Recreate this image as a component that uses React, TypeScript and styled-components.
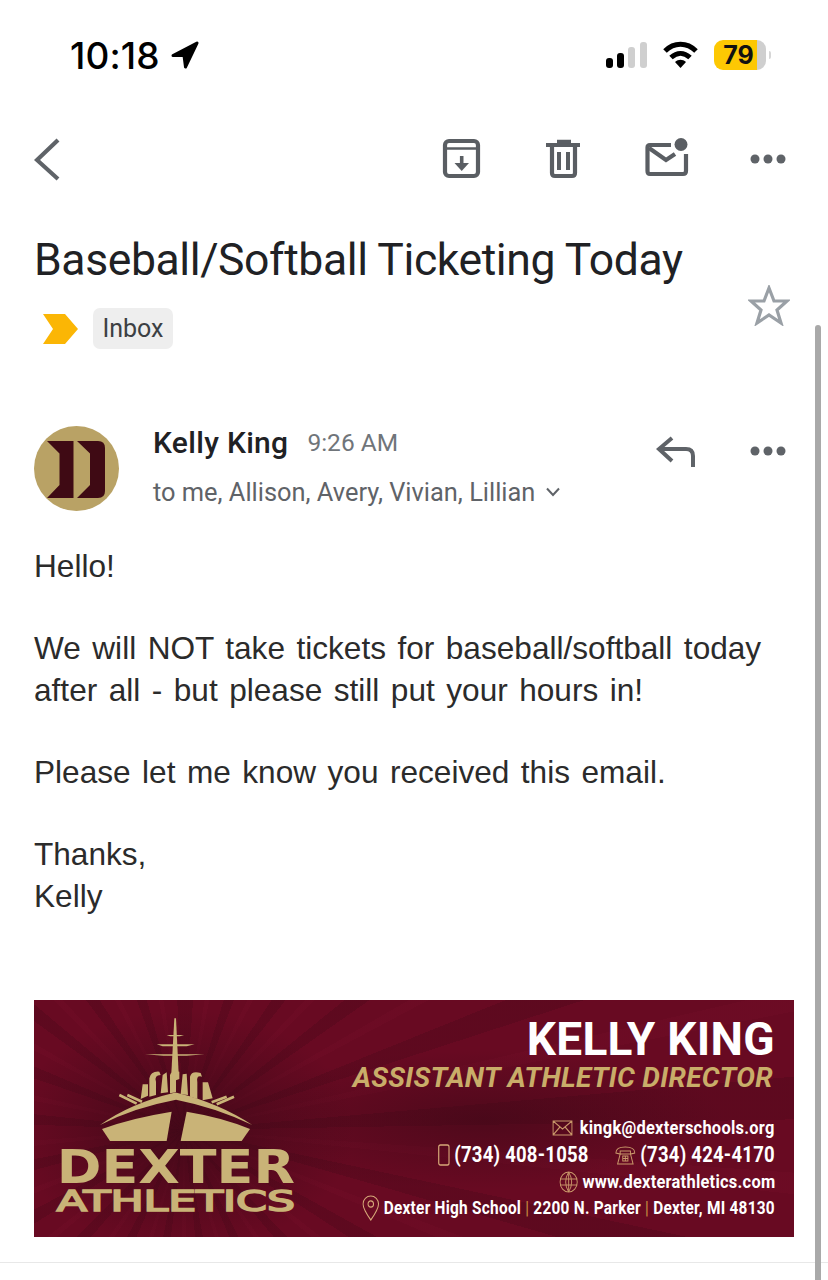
import React from "react";
import styled, { createGlobalStyle } from "styled-components";

const Global = createGlobalStyle`
  html, body { margin: 0; padding: 0; background: #fff; }
  * { box-sizing: border-box; }
`;
const Page = styled.div`
  position: relative; width: 828px; height: 1280px; overflow: hidden; background: #fff;
  font-family: Roboto, "Liberation Sans", sans-serif; color: #202124;
`;
const StatusBar = styled.div`
  height: 108px; padding: 40px 62px 0 70px; display: flex; justify-content: space-between; align-items: flex-start;
`;
const TimeGroup = styled.div`
  display: flex; align-items: center; gap: 11px; height: 30px; color: #000;
  font-family: Inter, sans-serif; font-weight: 500; font-size: 37px; letter-spacing: 0.1px;
`;
const StatusIcons = styled.div`display: flex; align-items: center; gap: 16px; height: 30px;`;
const Battery = styled.div`
  display: flex; align-items: center; justify-content: center; width: 52px; height: 30px; border-radius: 9px;
  background: linear-gradient(90deg, #fdc803 0 83%, #cfcfcf 83% 100%);
  font-family: Inter, sans-serif; font-weight: 700; font-size: 25px; color: #111; padding-right: 3px; position: relative;
  &::after { content: ""; position: absolute; right: -5px; top: 11px; width: 2px; height: 8px; border-radius: 0 2px 2px 0; background: #d6d6d6; }
`;
const Toolbar = styled.div`
  height: 102px; padding: 30px 42px 0 34px; display: flex; align-items: flex-start;
`;
const ToolSpacer = styled.div`flex: 1;`;
const ToolIcons = styled.div`display: flex; align-items: flex-start; gap: 65px;`;
const SubjectRow = styled.div`height: 98px; padding: 22px 34px 0 34px;`;
const Title = styled.h1`
  margin: 0; font-weight: 400; font-size: 44.5px; line-height: 56px; color: #202124; letter-spacing: -0.4px;
`;
const LabelRow = styled.div`
  height: 118px; padding: 0 39px 0 43px; display: flex; align-items: flex-start; position: relative;
`;
const LabelChip = styled.span`
  margin-left: 15px; width: 80px; height: 41px; border-radius: 7px; background: #eeeeee; display: flex; align-items: center; justify-content: center;
  font-size: 25px; color: #3c4043;
`;
const StarWrap = styled.div`position: absolute; right: 38px; top: -23px;`;
const MessageHead = styled.div`
  height: 100px; padding: 0 42px 0 34px; display: flex; align-items: flex-start;
`;
const Avatar = styled.div`flex: none; width: 85px; height: 85px;`;
const Meta = styled.div`margin-left: 34px; flex: 1;`;
const Sender = styled.div`display: flex; align-items: center; gap: 19px; height: 34px; line-height: 34px;`;
const SenderName = styled.span`font-size: 30px; font-weight: 500; color: #202124; letter-spacing: .3px;`;
const SentAt = styled.span`font-size: 24.5px; color: #70757a;`;
const Recipients = styled.div`
  margin-top: 15px; display: flex; align-items: center; gap: 11px; font-size: 25.4px; line-height: 34px; color: #5f6368;
`;
const HeadActions = styled.div`display: flex; align-items: flex-start; gap: 54px; padding-top: 10px;`;
const Body = styled.div`
  height: 474px; padding: 20px 34px 0; font-family: "Liberation Sans", Arial, sans-serif; font-size: 31.6px; line-height: 41.2px; color: #2b2b2b;
`;
const Para = styled.p`margin: 0 0 41.2px; word-spacing: 2.7px;`;
const Banner = styled.div`
  margin: 0 34px; width: 760px; height: 237px; display: flex; overflow: hidden; color: #fff;
  background:
    radial-gradient(ellipse 170px 120px at 150px 130px, rgba(58,8,22,.8), rgba(58,8,22,0)),
    radial-gradient(ellipse 240px 70px at 450px 120px, rgba(58,8,22,.55), rgba(58,8,22,0)),
    repeating-conic-gradient(from 0deg at 150px 130px, rgba(40,5,15,.16) 0 4deg, rgba(40,5,15,0) 4deg 9deg, rgba(135,20,50,.12) 9deg 11deg, rgba(40,5,15,0) 11deg 17deg),
    #680a22;
`;
const LogoSvg = styled.svg`flex: none; width: 300px; height: 237px;`;
const Card = styled.div`
  width: 460px; min-width: 0; padding: 15px 19px 0 0; display: flex; flex-direction: column; align-items: flex-end;
`;
const Name = styled.div`font-size: 46px; font-weight: 700; line-height: 48px; letter-spacing: .3px; color: #fff;`;
const JobTitle = styled.div`
  margin-top: -1px; padding-right: 2px; font-size: 28px; font-weight: 700; font-style: italic; line-height: 32px; color: #c9ad69; letter-spacing: .3px; white-space: nowrap;
`;
const ContactLine = styled.div<{ $mt?: number; $h?: number }>`
  margin-top: ${(p) => p.$mt ?? 0}px; height: ${(p) => p.$h ?? 27}px; display: flex; align-items: center; justify-content: flex-end; white-space: nowrap;
  font-size: 19.1px; font-weight: 700; transform: scaleX(.86); transform-origin: right center; letter-spacing: .3px; color: #fff;
`;
const BigContact = styled.span`font-size: 21.5px;`;
const SmallContact = styled.span`font-size: 17.9px;`;
const Gold = styled.span`color: #c9903f; font-weight: 400;`;
const IconGap = styled.span<{ $w: number; $l?: number }>`display: inline-flex; margin-right: ${(p) => p.$w}px; margin-left: ${(p) => p.$l ?? 0}px;`;
const Rule = styled.div`margin-top: 25px; height: 1px; background: #e8e8e8;`;
const Scrollbar = styled.div`
  position: absolute; left: 815px; top: 325px; width: 6px; height: 955px; border-radius: 3px 3px 0 0; background: #a9a9a9;
`;

const ic = "#5f6368";
const mailIc = "#5a5e63";

const App: React.FC = () => (
  <Page>
    <Global />
    <StatusBar>
      <TimeGroup>
        10:18
        <svg width="28" height="28" viewBox="0 0 28 28"><path d="M26 2 L14.500 26 L13 14.500 L2 14.500 Z" fill="#000" stroke="#000" strokeWidth="3" strokeLinejoin="round" /></svg>
      </TimeGroup>
      <StatusIcons>
        <svg width="41" height="28" viewBox="0 0 41 28">
          <rect x="0" y="17" width="7" height="10" rx="3" fill="#000" />
          <rect x="11" y="12" width="7" height="15" rx="3" fill="#000" />
          <rect x="22" y="6" width="7" height="21" rx="3" fill="#cfcfcf" />
          <rect x="34" y="1" width="7" height="26" rx="3" fill="#cfcfcf" />
        </svg>
        <svg width="35" height="28" viewBox="0 0 35 28" fill="none">
          <path d="M2 10 C11 1 24 1 33 10" stroke="#000" strokeWidth="5" />
          <path d="M8 16.500 C14 11 21 11 27 16.500" stroke="#000" strokeWidth="5" />
          <path d="M12 21 C15.500 18 19.500 18 23 21 L17.500 27 Z" fill="#000" />
        </svg>
        <Battery>79</Battery>
      </StatusIcons>
    </StatusBar>

    <Toolbar>
      <svg width="26" height="44" viewBox="0 0 26 44" fill="none"><path d="M24 2 L3 22 L24 41" stroke={ic} strokeWidth="4.200" /></svg>
      <ToolSpacer />
      <ToolIcons>
        <svg width="39" height="41" viewBox="0 0 39 41" fill="none">
          <rect x="3" y="3" width="33" height="35" rx="4" stroke={mailIc} strokeWidth="4.200" />
          <path d="M2 10.500 H37" stroke={mailIc} strokeWidth="2.500" />
          <path d="M19.700 18 V28" stroke={mailIc} strokeWidth="3.600" />
          <path d="M12.500 25 H27 L19.700 33 Z" fill={mailIc} />
        </svg>
        <svg width="34" height="41" viewBox="0 0 34 41" fill="none">
          <path d="M0 7 H35" stroke={mailIc} strokeWidth="4" />
          <path d="M11 3.500 H25" stroke={mailIc} strokeWidth="3.500" />
          <path d="M6 7 V35 Q6 38 9 38 H26 Q29 38 29 35 V7" stroke={mailIc} strokeWidth="4.200" />
          <path d="M13 14 V32 M22 14 V32" stroke={mailIc} strokeWidth="4" />
        </svg>
        <svg width="44" height="40" viewBox="0 0 44 40" fill="none">
          <path d="M26 7 H5 Q2.500 7 2.500 9.500 V33 Q2.500 36 5 36 H38 Q41 36 41 33 V16" stroke={mailIc} strokeWidth="4.200" />
          <path d="M4 10 L21 22 L30 16" stroke={mailIc} strokeWidth="4.200" />
          <circle cx="36" cy="6.500" r="6.500" fill={mailIc} />
        </svg>
        <svg width="36" height="40" viewBox="0 0 36 40" fill={ic} style={{ marginLeft: -4 }}>
          <circle cx="5" cy="21" r="4.500" /><circle cx="18" cy="21" r="4.500" /><circle cx="31" cy="21" r="4.500" />
        </svg>
      </ToolIcons>
    </Toolbar>

    <SubjectRow>
      <Title>Baseball/Softball Ticketing Today</Title>
    </SubjectRow>

    <LabelRow>
      <svg width="35" height="41" viewBox="0 0 35 41"><path d="M0 6 H22 L35 21 L22 36 H0 L10 21 Z" fill="#fbb605" /></svg>
      <LabelChip>Inbox</LabelChip>
      <StarWrap>
        <svg width="42" height="41" viewBox="0 0 42 41" fill="none"><path d="M21 3 L26 16 H39 L29 25 L33 38 L21 30 L9 38 L13 25 L3 16 H16 Z" stroke="#9aa0a6" strokeWidth="3.200" strokeLinejoin="miter" /></svg>
      </StarWrap>
    </LabelRow>

    <MessageHead>
      <Avatar>
        <svg width="85" height="85" viewBox="0 0 85 85">
          <circle cx="42.500" cy="42.500" r="42.500" fill="#b9a265" />
          <path d="M13 15 H39.500 V72 H13 L25.500 59 V27.500 Z" fill="#3f0a14" />
          <path d="M43 15 H64 Q71 15 71 22 V65 Q71 72 64 72 H43 L56 59 V27.500 Z" fill="#3f0a14" />
        </svg>
      </Avatar>
      <Meta>
        <Sender>
          <SenderName>Kelly King</SenderName>
          <SentAt>9:26 AM</SentAt>
        </Sender>
        <Recipients>
          to me, Allison, Avery, Vivian, Lillian
          <svg width="14" height="10" viewBox="0 0 14 10" fill="none"><path d="M1 1.500 L7 8 L13 1.500" stroke={ic} strokeWidth="2" /></svg>
        </Recipients>
      </Meta>
      <HeadActions>
        <svg width="40" height="32" viewBox="0 0 40 32" fill="none">
          <path d="M16 2 L3 13 L16 25" stroke={ic} strokeWidth="4" />
          <path d="M4 13 H30 Q37 13 37 20 V31" stroke={ic} strokeWidth="4" />
        </svg>
        <svg width="36" height="30" viewBox="0 0 36 30" fill={ic}>
          <circle cx="5" cy="15" r="4.500" /><circle cx="18" cy="15" r="4.500" /><circle cx="31" cy="15" r="4.500" />
        </svg>
      </HeadActions>
    </MessageHead>

    <Body>
      <Para>Hello!</Para>
      <Para>We will NOT take tickets for baseball/softball today<br />after all - but please still put your hours in!</Para>
      <Para>Please let me know you received this email.</Para>
      <Para>Thanks,<br />Kelly</Para>
    </Body>

    <Banner>
      <LogoSvg viewBox="12 15 900 711">
        <g fill="#c9b377">
          <path d="M433 70 H438 L446 235 H424 Z" />
          <path d="M410 120 H462 L450 124 H420 Z M380 148 H494 L470 154 H398 Z M345 178 H524 L470 182 H400 Z" />
          <path d="M210 390 Q300 325 433 293 L440 293 Q570 325 667 390 Q560 338 438 314 Q310 338 210 390 Z" />
          <path d="M216 402 Q300 370 425 350 L410 438 H240 Z" />
          <path d="M470 350 Q580 368 660 402 L635 438 H452 Z" />
          <path d="M358 305 V250 Q362 228 388 230 L392 240 Q372 240 378 260 V300 Z" />
          <path d="M420 295 V240 Q425 226 448 230 V252 L438 256 V292 Z" />
          <path d="M480 305 V245 Q485 226 512 234 L516 245 Q498 240 502 262 V312 Z" />
          <path d="M392 295 L398 240 L410 232 L414 292 Z M452 298 L458 238 L470 236 L474 300 Z" />
          <path d="M332 312 L338 268 H354 V302 Z M518 316 V262 H534 L548 310 Z" />
        </g>
        <g stroke="#c9b377" strokeWidth="8">
          <path d="M268 300 L320 326 M292 300 L336 320 M612 305 L560 328 M590 305 L545 322" />
        </g>
        <text x="80" y="565" textLength="715" lengthAdjust="spacingAndGlyphs" fontFamily="DejaVu Sans" fontWeight="700" fontSize="138" fill="#c9b377">DEXTER</text>
        <text x="80" y="648" textLength="715" lengthAdjust="spacingAndGlyphs" fontFamily="DejaVu Sans" fontWeight="400" fontSize="86" fill="#c9b377" stroke="#c9b377" strokeWidth="5">ATHLETICS</text>
      </LogoSvg>
      <Card>
        <Name>KELLY KING</Name>
        <JobTitle>ASSISTANT ATHLETIC DIRECTOR</JobTitle>
        <ContactLine $mt={20}>
          <IconGap $w={8}>
            <svg width="24" height="16" viewBox="0 0 24 16" fill="none"><path d="M1 1 H23 V15 H1 Z M1 1 L12 9 L23 1 M1 15 L9 7 M23 15 L15 7" stroke="#c9986a" strokeWidth="1.200" /></svg>
          </IconGap>
          kingk@dexterschools.org
        </ContactLine>
        <ContactLine>
          <IconGap $w={5}>
            <svg width="14" height="22" viewBox="0 0 14 22" fill="none"><rect x="1" y="1" width="12" height="20" rx="2" stroke="#d6a878" strokeWidth="1.400" /></svg>
          </IconGap>
          <BigContact>(734) 408-1058</BigContact>
          <IconGap $w={5} $l={31}>
            <svg width="24" height="20" viewBox="0 0 24 20" fill="none"><path d="M1 8 Q1 2 12 2 Q23 2 23 8 L18 9 V6 H6 V9 Z M6 9 L3 19 H21 L18 9 Z M9 11 H15 V16 H9 Z M12 11 V16 M9 13.500 H15" stroke="#c9986a" strokeWidth="1.100" /></svg>
          </IconGap>
          <BigContact>(734) 424-4170</BigContact>
        </ContactLine>
        <ContactLine>
          <IconGap $w={5}>
            <svg width="22" height="22" viewBox="0 0 22 22" fill="none"><circle cx="11" cy="11" r="10" stroke="#c9986a" strokeWidth="1.100" /><path d="M1 8 H21 M1 14 H21 M11 1 V21 M11 1 Q4 11 11 21 M11 1 Q18 11 11 21" stroke="#c9986a" strokeWidth="1" /></svg>
          </IconGap>
          www.dexterathletics.com
        </ContactLine>
        <ContactLine $h={25}>
          <IconGap $w={5}>
            <svg width="20" height="26" viewBox="0 0 20 26" fill="none"><path d="M10 25 Q1 14 1 9 A9 8 0 0 1 19 9 Q19 14 10 25 Z" stroke="#d6a878" strokeWidth="1.200" /><circle cx="10" cy="9" r="3.200" stroke="#d6a878" strokeWidth="1.200" /></svg>
          </IconGap>
          <SmallContact>Dexter High School <Gold>|</Gold> 2200 N. Parker <Gold>|</Gold> Dexter, MI 48130</SmallContact>
        </ContactLine>
      </Card>
    </Banner>
    <Rule />
    <Scrollbar />
  </Page>
);

export default App;
